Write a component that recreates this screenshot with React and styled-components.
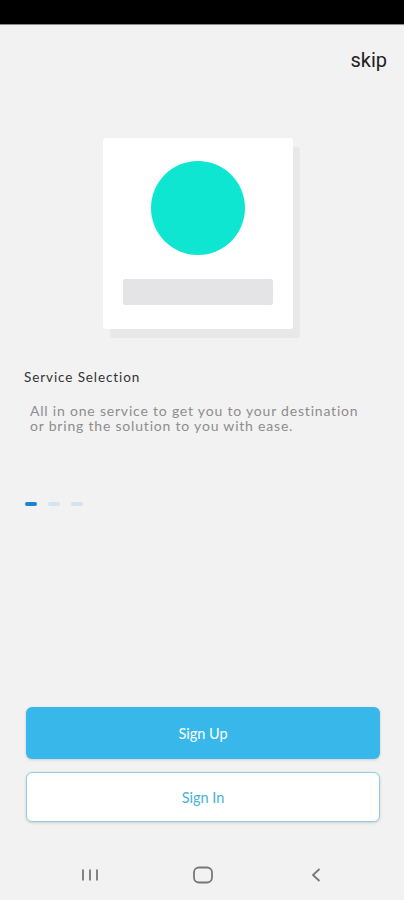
import styled, { createGlobalStyle } from "styled-components";

const Global = createGlobalStyle`
  html, body { margin: 0; padding: 0; }
  body { background: #f2f2f2; font-family: Lato, "Noto Sans", sans-serif; }
`;

const Screen = styled.div`
  width: 404px;
  height: 900px;
  display: flex;
  flex-direction: column;
  background: #f2f2f2;
`;

const StatusBar = styled.div`
  height: 25px;
  background: #000;
  border-bottom: 1px solid #8a8a8a;
  box-sizing: border-box;
`;

const TopBar = styled.div`
  display: flex;
  justify-content: flex-end;
  padding: 23px 17px 0 0;
  height: 48px;
  box-sizing: border-box;
`;

const Skip = styled.span`
  font-family: Roboto, sans-serif;
  font-size: 20px;
  color: #222;
  line-height: 24px;
`;

const Illustration = styled.div`
  display: flex;
  justify-content: center;
  padding-top: 65px;
  padding-right: 8px;
`;

const Card = styled.div`
  width: 190px;
  height: 191px;
  background: #fff;
  border-radius: 3px;
  box-shadow: 7px 9px 0 #e8e8e8;
  display: flex;
  flex-direction: column;
  align-items: center;
  box-sizing: border-box;
  padding-top: 23px;
`;

const Circle = styled.div`
  width: 94px;
  height: 94px;
  border-radius: 50%;
  background: #0ee6d2;
`;

const Placeholder = styled.div`
  margin-top: 24px;
  width: 150px;
  height: 26px;
  background: #e4e4e6;
  border-radius: 2px;
`;

const Title = styled.h2`
  margin: 39px 0 0 24px;
  font-size: 13.5px;
  font-weight: 400;
  letter-spacing: 0.9px;
  color: #333;
  line-height: 18px;
`;

const Body = styled.p`
  margin: 17px 0 0 30px;
  font-size: 14px;
  letter-spacing: 0.8px;
  line-height: 15px;
  color: #8d8d8d;
  width: 340px;
`;

const Dots = styled.div`
  display: flex;
  gap: 11px;
  margin: 69px 0 0 25px;
`;

const Dot = styled.span`
  width: 12px;
  height: 4px;
  border-radius: 2px;
  background: ${(p) => (p.active ? "#1c82d8" : "#d4e3ef")};
`;

const Spacer = styled.div`
  flex: 1;
`;

const Actions = styled.div`
  display: flex;
  flex-direction: column;
  gap: 13px;
  padding: 0 24px 0 26px;
`;

const Button = styled.button`
  height: ${(p) => (p.outline ? "50px" : "52px")};
  border-radius: 6px;
  font-family: Lato, sans-serif;
  font-size: 14.5px;
  cursor: pointer;
  background: ${(p) => (p.outline ? "#fff" : "#38b8ea")};
  color: ${(p) => (p.outline ? "#47b2d8" : "#fff")};
  border: ${(p) => (p.outline ? "1.5px solid #8ccfde" : "none")};
  box-shadow: 0 1px 3px rgba(0, 0, 0, 0.15);
`;

const NavBar = styled.div`
  height: 50px;
  margin-top: 28px;
  display: flex;
  align-items: center;
  justify-content: space-between;
  padding: 0 77px 0 78px;
`;

const NavIcon = styled.svg`
  display: block;
`;

export default function App() {
  return (
    <Screen>
      <Global />
      <StatusBar />
      <TopBar>
        <Skip>skip</Skip>
      </TopBar>
      <Illustration>
        <Card>
          <Circle />
          <Placeholder />
        </Card>
      </Illustration>
      <Title>Service Selection</Title>
      <Body>
        All in one service to get you to your destination or bring the solution to you with ease.
      </Body>
      <Dots>
        <Dot active />
        <Dot />
        <Dot />
      </Dots>
      <Spacer />
      <Actions>
        <Button>Sign Up</Button>
        <Button outline>Sign In</Button>
      </Actions>
      <NavBar>
        <NavIcon width="24" height="20" viewBox="0 0 24 20">
          <path d="M5 4.5v11M12 4.5v11M19 4.5v11" stroke="#777" strokeWidth="1.8" />
        </NavIcon>
        <NavIcon width="24" height="20" viewBox="0 0 24 20">
          <rect x="3" y="2.5" width="18" height="15" rx="5" fill="none" stroke="#777" strokeWidth="1.8" />
        </NavIcon>
        <NavIcon width="24" height="20" viewBox="0 0 24 20">
          <path d="M16.5 4l-6.5 6 6.5 6" fill="none" stroke="#777" strokeWidth="1.8" />
        </NavIcon>
      </NavBar>
    </Screen>
  );
}
